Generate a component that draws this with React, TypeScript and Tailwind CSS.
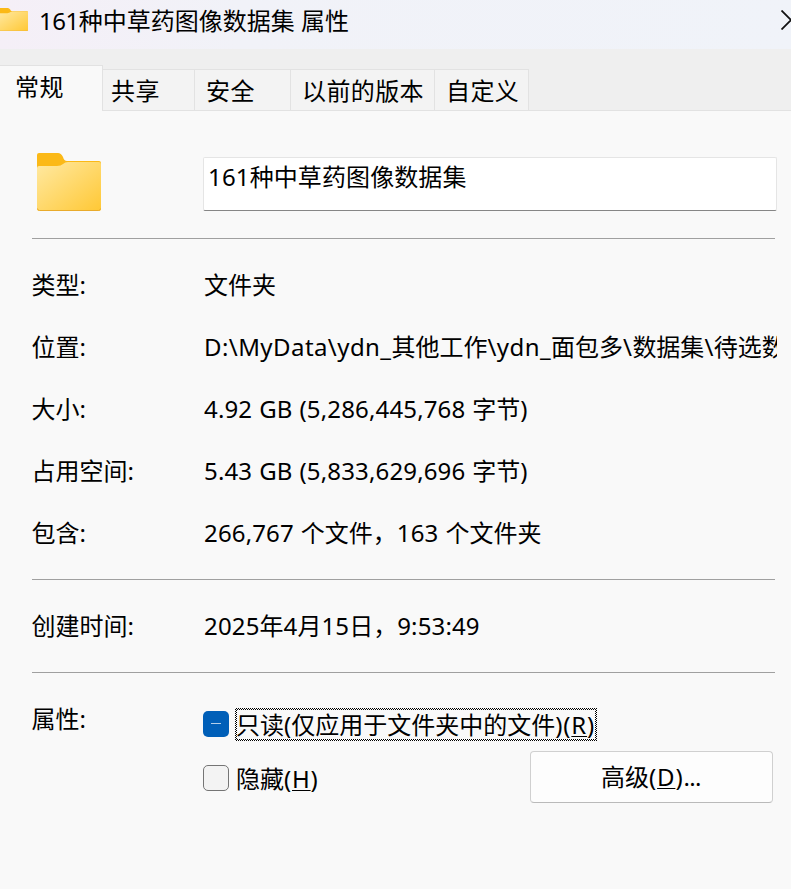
import React from 'react';

// Latin runs get their own tracking, separate from the Chinese text around them
function Txt({ children, tracking = 'tracking-[0.15px]' }: { children: string; tracking?: string }) {
  return (
    <>
      {children.split(/([\x21-\x7e]+)/).map((part, i) =>
        i % 2 ? (
          <span key={i} className={tracking}>{part}</span>
        ) : (
          <React.Fragment key={i}>{part}</React.Fragment>
        )
      )}
    </>
  );
}

function HotKey({ letter }: { letter: string }) {
  return (
    <span className="tracking-[0.8px]">
      (<span className="underline decoration-1 underline-offset-[2px] [text-decoration-skip-ink:none]">{letter}</span>)
    </span>
  );
}

function Folder({ className }: { className: string }) {
  return (
    <svg viewBox="0 0 64 58" preserveAspectRatio="none" className={className}>
      <defs>
        <linearGradient id="folder" x1="0" y1="0" x2="1" y2="1">
          <stop offset="0" stopColor="#ffe9a2" />
          <stop offset="1" stopColor="#ffc835" />
        </linearGradient>
      </defs>
      <path d="M0 2Q0 0 2 0H21Q24 0 26 4Q27 8 30 8H62Q64 8 64 10V20H0Z" fill="#fbb917" />
      <path d="M0 15Q0 13 2 13H20Q24 13 26 11Q28 9 31 9H62Q64 9 64 11V56Q64 58 62 58H2Q0 58 0 56Z" fill="url(#folder)" />
      <path d="M0.5 55.5Q0.5 57.5 2.5 57.5H61.5Q63.5 57.5 63.5 55.5" fill="none" stroke="#e9ab2c" />
    </svg>
  );
}

function Row({ label, value, tracking }: { label: string; value: string; tracking?: string }) {
  return (
    <div className="flex h-[62px] items-center">
      <div className="-ml-[0.5px] w-[172.5px] shrink-0"><Txt tracking="tracking-[-0.6px]">{label}</Txt></div>
      <div className="w-[573px] overflow-hidden whitespace-nowrap [word-spacing:0.7px]"><Txt tracking={tracking}>{value}</Txt></div>
    </div>
  );
}

const tabs = [
  { name: '共享', className: 'w-[92px] pl-[8px]' },
  { name: '安全', className: 'w-[96px] pl-[11px]' },
  { name: '以前的版本', className: 'w-[144px] pl-[11px]' },
  { name: '自定义', className: 'w-[94px] pl-[11px]' },
];

export default function App() {
  return (
    <div className="flex h-[889px] w-[791px] flex-col overflow-hidden bg-[#f9f9f9] font-['Noto_Sans','Noto_Sans_CJK_SC',sans-serif] text-[24px] leading-[32px] text-black">
      {/* Title bar */}
      <div className="flex h-[49px] shrink-0 items-start overflow-hidden bg-linear-to-r from-[#f5eff7] via-[#f1f2f8] via-30% to-[#f0f3f9]">
        <Folder className="-ml-[2px] mt-[8px] h-[23px] w-[30px] shrink-0" />
        <div className="ml-[11px] mt-[5px] grow"><Txt tracking="tracking-[-0.5px]">161种中草药图像数据集 属性</Txt></div>
        <svg viewBox="0 0 20 20" className="-mr-[10px] mt-[10px] h-5 w-5 shrink-0">
          <path d="M0.5 0.5L19.5 19.5M19.5 0.5L0.5 19.5" stroke="#111" strokeWidth="1.8" />
        </svg>
      </div>

      {/* Tabs */}
      <div className="flex h-[62px] shrink-0 items-end bg-[#efefef] tracking-[0.4px]">
        <div className="h-[46px] w-[103px] border-t border-r border-[#e2e2e2] bg-[#f9f9f9] pl-[15px] pt-[5px]">常规</div>
        {tabs.map((tab) => (
          <div key={tab.name} className={`h-[42px] border-t border-r border-b border-[#e2e2e2] bg-[#f3f3f3] pt-[5px] whitespace-nowrap ${tab.className}`}>
            {tab.name}
          </div>
        ))}
        <div className="h-[42px] grow border-b border-[#e2e2e2]" />
      </div>

      <div className="pl-8">
        <div className="flex h-[127px] pt-[42px]">
          <Folder className="ml-[5px] h-[58px] w-[64px]" />
          <div className="ml-[102px] mt-[4px] h-[54px] w-[574px] rounded-[2px] border border-[#e5e5e5] border-b-[#868686] bg-white pl-[4px] pt-[3px] tracking-[0.1px]">
            <Txt>161种中草药图像数据集</Txt>
          </div>
        </div>
        <div className="h-px w-[743px] bg-[#a0a0a0]" />

        <div className="h-[340px] pt-[15px]">
          <Row label="类型:" value="文件夹" />
          <Row label="位置:" value="D:\MyData\ydn_其他工作\ydn_面包多\数据集\待选数" tracking="tracking-[0.43px]" />
          <Row label="大小:" value="4.92 GB (5,286,445,768 字节)" />
          <Row label="占用空间:" value="5.43 GB (5,833,629,696 字节)" />
          <Row label="包含:" value="266,767 个文件，163 个文件夹" />
        </div>
        <div className="h-px w-[743px] bg-[#a0a0a0]" />

        <div className="h-[92px] pt-[15px]">
          <Row label="创建时间:" value="2025年4月15日，9:53:49" />
        </div>
        <div className="h-px w-[743px] bg-[#a0a0a0]" />

        {/* Attributes */}
        <div className="flex">
          <div className="-ml-[0.5px] w-[171.5px] shrink-0 pt-[30px]"><Txt tracking="tracking-[-0.6px]">属性:</Txt></div>
          <div className="w-[570px] pt-[35px]">
            <div className="flex h-[33px] items-center">
              <div className="mt-[-2px] flex h-[26px] w-[26px] items-center justify-center rounded-[5px] bg-[#005fb8]">
                <div className="h-[1.5px] w-[10px] bg-[#b3cfea]" />
              </div>
              <div className="ml-[6px] h-[33px] w-[362px] bg-[repeating-conic-gradient(#000_0_25%,#fff_0_50%)] bg-[length:2px_2px] p-[2px]">
                <div className="-indent-[1px] h-full bg-[#f9f9f9] leading-[29px] whitespace-nowrap">
                  只读<Txt>(</Txt>仅应用于文件夹中的文件<Txt tracking="tracking-[0.8px]">)</Txt><HotKey letter="R" />
                </div>
              </div>
            </div>
            <div className="flex">
              <div className="mt-[24px] h-[26px] w-[26px] rounded-[5px] border-[1.5px] border-[#757575] bg-[#f3f3f3]" />
              <div className="ml-[7px] mt-[22px] grow">隐藏<HotKey letter="H" /></div>
              <div className="mt-[10px] flex h-[52px] w-[243px] items-center justify-center rounded-[4px] border border-[#d0d0d0] border-b-[#bababa] bg-[#fdfdfd]">
                <div className="-ml-[1px]">高级<HotKey letter="D" /><span className="tracking-[-0.6px]">...</span></div>
              </div>
            </div>
          </div>
        </div>
      </div>
    </div>
  );
}
